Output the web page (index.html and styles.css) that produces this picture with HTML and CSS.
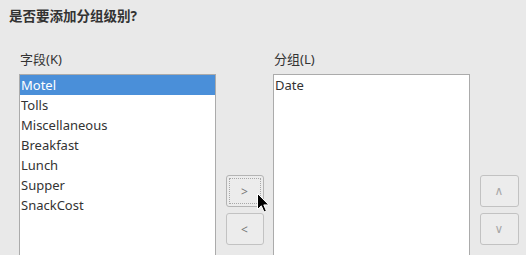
FILE: index.html
```html
<!DOCTYPE html>
<html>
<head>
<meta charset="utf-8">
<link rel="stylesheet" href="styles.css">
</head>
<body>
<div class="title">是否要添加分组级别?</div>
<div class="main">
  <div class="col">
    <div class="label">字段(K)</div>
    <ul class="list">
      <li class="sel">Motel</li>
      <li>Tolls</li>
      <li>Miscellaneous</li>
      <li>Breakfast</li>
      <li>Lunch</li>
      <li>Supper</li>
      <li>SnackCost</li>
    </ul>
  </div>
  <div class="mid">
    <div class="btn focus">&gt;</div>
    <div class="btn">&lt;</div>
  </div>
  <div class="col">
    <div class="label">分组(L)</div>
    <ul class="list">
      <li>Date</li>
    </ul>
  </div>
  <div class="mid side">
    <div class="btn small">∧</div>
    <div class="btn small">∨</div>
  </div>
</div>
<svg class="cursor" width="14" height="22" viewBox="-1 -1 14 22"><path d="M0.5 0.5 L0.5 16.5 L4.3 12.8 L7 19 L9.4 18 L6.8 11.9 L11.8 11.9 Z" fill="#000" stroke="#fff" stroke-width="1" stroke-linejoin="round"/></svg>
</body>
</html>
```

FILE: styles.css
```css
html, body {
  margin: 0;
  padding: 0;
  background: #e9e9e9;
  width: 526px;
  height: 255px;
  overflow: hidden;
  font-family: "Noto Sans", "Noto Sans CJK SC", sans-serif;
  color: #333;
  position: relative;
}
.title {
  box-sizing: border-box;
  padding: 6px 0 0 9px;
  font-size: 13.5px;
  font-weight: bold;
  line-height: 20px;
  height: 42px;
}
.main {
  display: flex;
  align-items: flex-start;
  padding-left: 19px;
  height: 213px;
}
.col {
  width: 197px;
  display: flex;
  flex-direction: column;
}
.label {
  font-size: 13px;
  line-height: 18px;
  padding-left: 1px;
  box-sizing: border-box;
  height: 32px;
  display: flex;
  align-items: flex-end;
  padding-bottom: 6px;
}
.list {
  margin: 0;
  padding: 0;
  list-style: none;
  background: #fff;
  border: 1px solid #ababab;
  border-bottom: none;
  height: 180px;
}
.list li {
  font-size: 13px;
  line-height: 20px;
  height: 20px;
  padding-left: 1px;
  color: #333;
}
.list li.sel {
  background: #4a8fd9;
  color: #fff;
}
.mid {
  width: 57px;
  display: flex;
  flex-direction: column;
  align-items: center;
  gap: 6px;
  padding-top: 133px;
}
.side {
  width: 56px;
  padding-left: 2px;
  box-sizing: border-box;
}
.btn {
  width: 38px;
  height: 32px;
  box-sizing: border-box;
  border: 1px solid #c2c2c2;
  border-radius: 3px;
  background: #ececec;
  display: flex;
  align-items: center;
  justify-content: center;
  font-size: 12px;
  color: #777;
}
.btn.small {
  width: 39px;
  color: #a8a8a8;
  font-size: 12px;
  font-family: "DejaVu Sans", sans-serif;
}
.btn.focus {
  outline: 1px dotted #a8a8a8;
  outline-offset: -4px;
  border-color: #b4b4b4;
}
.cursor {
  position: absolute;
  left: 256px;
  top: 192px;
}
```
